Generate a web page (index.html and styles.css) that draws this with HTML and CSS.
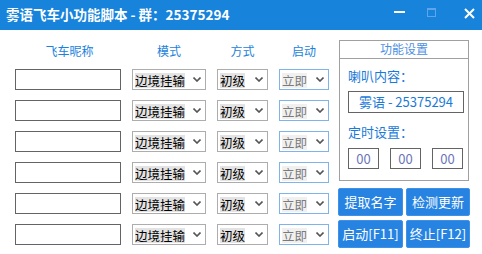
FILE: index.html
```html
<!DOCTYPE html>
<html lang="zh-CN">
<head>
  <meta charset="UTF-8" />
  <title>雾语飞车小功能脚本</title>
  <link rel="stylesheet" href="styles.css">
</head>
<body>
  <div class="titlebar">
    <span class="title">雾语飞车小功能脚本 - 群：25375294</span>
    <div class="win-btns">
      <svg class="win-min" width="11" height="30" viewBox="0 0 11 30"><rect x="0" y="11" width="11" height="2" fill="#fff"/></svg>
      <svg class="win-max" width="9" height="30" viewBox="0 0 9 30"><rect x="0.5" y="8.5" width="8" height="8" fill="none" stroke="#5fa5ec"/><rect x="0.5" y="8.5" width="8" height="1.5" fill="#5fa5ec"/></svg>
      <svg class="win-close" width="11" height="30" viewBox="0 0 11 30"><path d="M1 9 L10 18 M10 9 L1 18" stroke="#fff" stroke-width="2"/></svg>
    </div>
  </div>

  <div class="main">
    <div class="left">
      <div class="heads">
        <span>飞车昵称</span>
        <span>模式</span>
        <span>方式</span>
        <span>启动</span>
      </div>
      <div class="rows">
        <div class="name-box"></div>
        <div class="drop"><span class="val">边境挂输</span><svg class="arrow" width="8" height="5" viewBox="0 0 8 5"><path d="M0.5 0.5 L4 4 L7.5 0.5" fill="none" stroke="#555" stroke-width="1.6"/></svg></div>
        <div class="drop"><span class="val">初级</span><svg class="arrow" width="8" height="5" viewBox="0 0 8 5"><path d="M0.5 0.5 L4 4 L7.5 0.5" fill="none" stroke="#555" stroke-width="1.6"/></svg></div>
        <div class="drop drop-off"><span class="val">立即</span><svg class="arrow" width="8" height="5" viewBox="0 0 8 5"><path d="M0.5 0.5 L4 4 L7.5 0.5" fill="none" stroke="#555" stroke-width="1.6"/></svg></div>

        <div class="name-box"></div>
        <div class="drop"><span class="val">边境挂输</span><svg class="arrow" width="8" height="5" viewBox="0 0 8 5"><path d="M0.5 0.5 L4 4 L7.5 0.5" fill="none" stroke="#555" stroke-width="1.6"/></svg></div>
        <div class="drop"><span class="val">初级</span><svg class="arrow" width="8" height="5" viewBox="0 0 8 5"><path d="M0.5 0.5 L4 4 L7.5 0.5" fill="none" stroke="#555" stroke-width="1.6"/></svg></div>
        <div class="drop drop-off"><span class="val">立即</span><svg class="arrow" width="8" height="5" viewBox="0 0 8 5"><path d="M0.5 0.5 L4 4 L7.5 0.5" fill="none" stroke="#555" stroke-width="1.6"/></svg></div>

        <div class="name-box"></div>
        <div class="drop"><span class="val">边境挂输</span><svg class="arrow" width="8" height="5" viewBox="0 0 8 5"><path d="M0.5 0.5 L4 4 L7.5 0.5" fill="none" stroke="#555" stroke-width="1.6"/></svg></div>
        <div class="drop"><span class="val">初级</span><svg class="arrow" width="8" height="5" viewBox="0 0 8 5"><path d="M0.5 0.5 L4 4 L7.5 0.5" fill="none" stroke="#555" stroke-width="1.6"/></svg></div>
        <div class="drop drop-off"><span class="val">立即</span><svg class="arrow" width="8" height="5" viewBox="0 0 8 5"><path d="M0.5 0.5 L4 4 L7.5 0.5" fill="none" stroke="#555" stroke-width="1.6"/></svg></div>

        <div class="name-box"></div>
        <div class="drop"><span class="val">边境挂输</span><svg class="arrow" width="8" height="5" viewBox="0 0 8 5"><path d="M0.5 0.5 L4 4 L7.5 0.5" fill="none" stroke="#555" stroke-width="1.6"/></svg></div>
        <div class="drop"><span class="val">初级</span><svg class="arrow" width="8" height="5" viewBox="0 0 8 5"><path d="M0.5 0.5 L4 4 L7.5 0.5" fill="none" stroke="#555" stroke-width="1.6"/></svg></div>
        <div class="drop drop-off"><span class="val">立即</span><svg class="arrow" width="8" height="5" viewBox="0 0 8 5"><path d="M0.5 0.5 L4 4 L7.5 0.5" fill="none" stroke="#555" stroke-width="1.6"/></svg></div>

        <div class="name-box"></div>
        <div class="drop"><span class="val">边境挂输</span><svg class="arrow" width="8" height="5" viewBox="0 0 8 5"><path d="M0.5 0.5 L4 4 L7.5 0.5" fill="none" stroke="#555" stroke-width="1.6"/></svg></div>
        <div class="drop"><span class="val">初级</span><svg class="arrow" width="8" height="5" viewBox="0 0 8 5"><path d="M0.5 0.5 L4 4 L7.5 0.5" fill="none" stroke="#555" stroke-width="1.6"/></svg></div>
        <div class="drop drop-off"><span class="val">立即</span><svg class="arrow" width="8" height="5" viewBox="0 0 8 5"><path d="M0.5 0.5 L4 4 L7.5 0.5" fill="none" stroke="#555" stroke-width="1.6"/></svg></div>

        <div class="name-box"></div>
        <div class="drop"><span class="val">边境挂输</span><svg class="arrow" width="8" height="5" viewBox="0 0 8 5"><path d="M0.5 0.5 L4 4 L7.5 0.5" fill="none" stroke="#555" stroke-width="1.6"/></svg></div>
        <div class="drop"><span class="val">初级</span><svg class="arrow" width="8" height="5" viewBox="0 0 8 5"><path d="M0.5 0.5 L4 4 L7.5 0.5" fill="none" stroke="#555" stroke-width="1.6"/></svg></div>
        <div class="drop drop-off"><span class="val">立即</span><svg class="arrow" width="8" height="5" viewBox="0 0 8 5"><path d="M0.5 0.5 L4 4 L7.5 0.5" fill="none" stroke="#555" stroke-width="1.6"/></svg></div>
      </div>
    </div>

    <div class="right">
      <div class="group">
        <div class="group-title">功能设置</div>
        <div class="group-body">
          <div class="label">喇叭内容：</div>
          <div class="speaker">雾语 - 25375294</div>
          <div class="label label-timer">定时设置：</div>
          <div class="timer">
            <div class="time-box">00</div>
            <div class="time-box">00</div>
            <div class="time-box">00</div>
          </div>
        </div>
      </div>
      <div class="btns">
        <button class="btn">提取名字</button>
        <button class="btn">检测更新</button>
        <button class="btn">启动[F11]</button>
        <button class="btn">终止[F12]</button>
      </div>
    </div>
  </div>
</body>
</html>
```

FILE: styles.css
```css
body {
  margin: 0;
  width: 482px;
  height: 254px;
  overflow: hidden;
  background: #fff;
  font-family: "Noto Sans CJK SC", "Noto Sans", sans-serif;
}
.titlebar {
  height: 30px;
  background: #1783db;
  display: flex;
  align-items: center;
  padding-left: 6px;
}
.title {
  color: #fff;
  font-size: 13.5px;
  font-weight: bold;
  line-height: 16px;
  margin-top: -3px;
}
.win-btns {
  margin-left: auto;
  display: flex;
  height: 30px;
}
.win-btns svg {
  display: block;
}
.win-min {
  margin-right: 22px;
}
.win-max {
  margin-right: 28px;
}
.win-close {
  margin-right: 7px;
}
.main {
  display: flex;
  gap: 10px;
}
.left {
  padding: 13px 0 0 15px;
}
.heads, .rows {
  display: grid;
  grid-template-columns: 106px 74px 51px 50px;
  column-gap: 11px;
}
.heads {
  height: 16px;
  margin-bottom: 10px;
}
.heads span {
  text-align: center;
  color: #1a82dc;
  font-size: 12px;
  line-height: 16px;
}
.heads span:first-child {
  padding-left: 3px;
}
.rows {
  grid-auto-rows: 21px;
  row-gap: 10px;
}
.name-box {
  border: 1px solid #646464;
}
.drop {
  border: 1px solid #adadad;
  display: flex;
  align-items: center;
  padding-left: 2px;
  padding-right: 4px;
}
.drop .val {
  background: #e3e3e3;
  color: #000;
  font-size: 12.5px;
  line-height: 15px;
  margin-top: 1px;
}
.drop .arrow {
  margin-left: auto;
}
.drop-off {
  border-color: #7eb4ea;
}
.drop-off .val {
  background: #f0f0f0;
  color: #7a7a7a;
}
.right {
  padding-top: 10px;
}
.group {
  width: 128px;
  border: 1px solid #a0a0a0;
}
.group-title {
  height: 17px;
  border-bottom: 1px solid #a0a0a0;
  text-align: center;
  color: #4d90e2;
  font-size: 12px;
  line-height: 16px;
}
.group-body {
  padding: 9px 4px 11px 8px;
}
.label {
  color: #1a7ad8;
  font-size: 13px;
  line-height: 16px;
}
.speaker {
  margin-top: 7px;
  height: 20px;
  border: 1px solid #646464;
  text-align: center;
  color: #1a7ad8;
  font-size: 13px;
  line-height: 20px;
}
.label-timer {
  margin-top: 11px;
}
.timer {
  margin-top: 8px;
  display: flex;
  justify-content: space-between;
  width: 115px;
}
.time-box {
  width: 29px;
  height: 19px;
  border: 1px solid #646464;
  text-align: center;
  color: #6c74b8;
  font-size: 13px;
  line-height: 19px;
}
.btns {
  margin: 7px 0 0 -1px;
  display: grid;
  grid-template-columns: 65px 64px;
  grid-auto-rows: 28px;
  gap: 4px 3px;
}
.btn {
  background: #2683e2;
  border: 1px solid #3d91e6;
  border-radius: 2px;
  color: #fff;
  font-family: "Noto Sans CJK SC", "Noto Sans", sans-serif;
  font-size: 13px;
  padding: 0;
  line-height: 26px;
}
```
